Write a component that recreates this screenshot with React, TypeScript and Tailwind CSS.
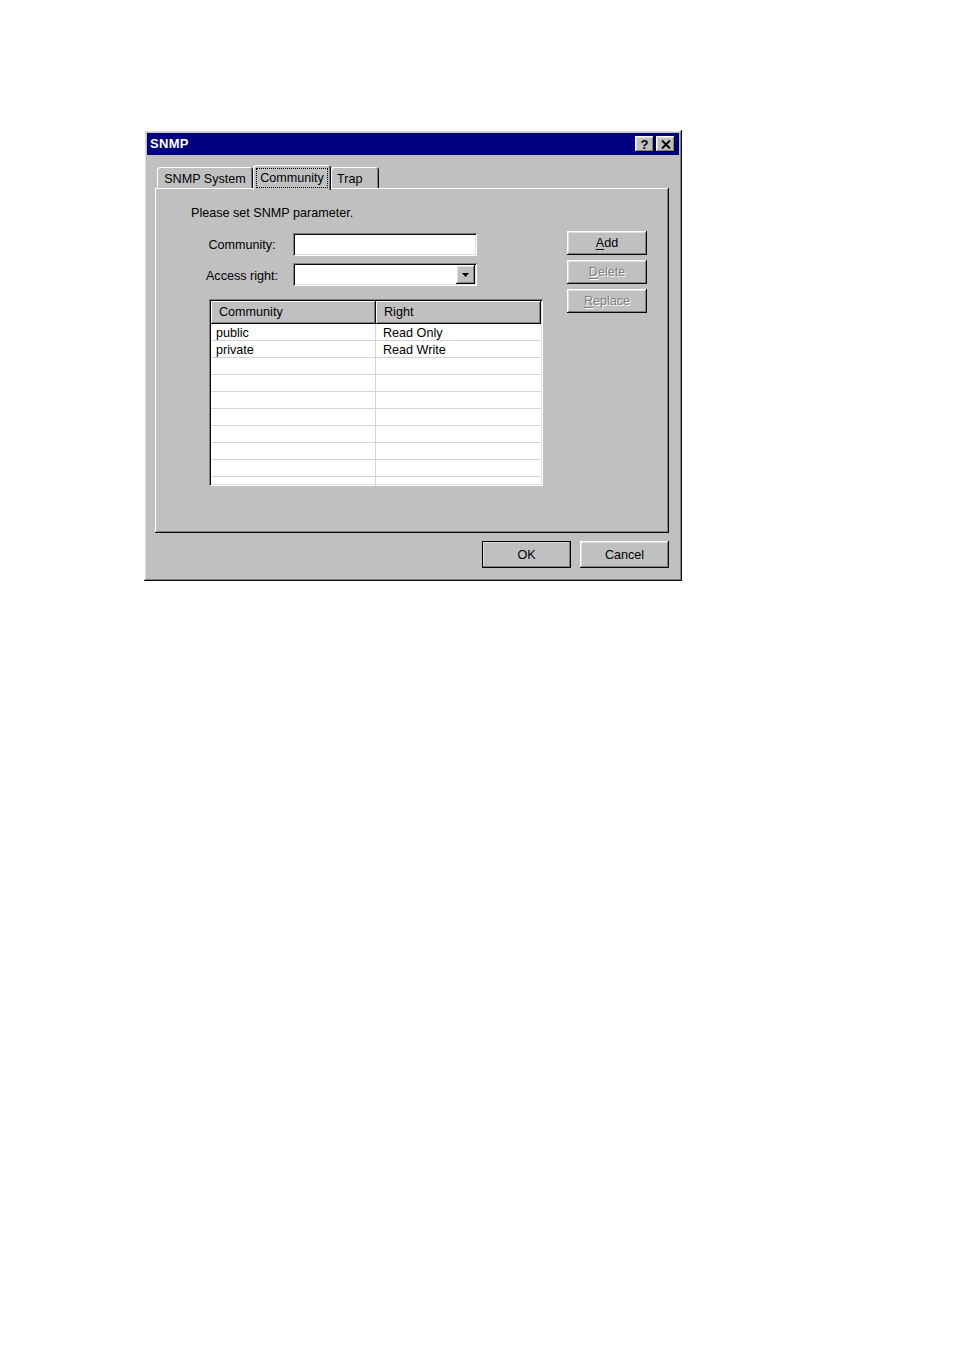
import React from "react";

const raised =
  "shadow-[inset_-1px_-1px_#0a0a0a,inset_1px_1px_#ffffff,inset_-2px_-2px_#808080,inset_2px_2px_#dfdfdf]";
const sunken =
  "shadow-[inset_1px_1px_#808080,inset_-1px_-1px_#ffffff,inset_2px_2px_#0a0a0a,inset_-2px_-2px_#dfdfdf]";
const headerCell =
  "flex items-center bg-[#c0c0c0] pl-[8px] shadow-[inset_-1px_-1px_#0a0a0a,inset_1px_1px_#ffffff,inset_-2px_-2px_#808080]";

function Btn({
  children,
  disabled,
  className = "",
}: {
  children: React.ReactNode;
  disabled?: boolean;
  className?: string;
}) {
  return (
    <div
      className={`flex items-center justify-center bg-[#c0c0c0] ${raised} ${
        disabled ? "text-[#808080] [text-shadow:1px_1px_0_#ffffff]" : "text-black"
      } ${className}`}
    >
      {children}
    </div>
  );
}

function Tab({
  label,
  active,
  className = "",
}: {
  label: string;
  active?: boolean;
  className?: string;
}) {
  if (active) {
    return (
      <div
        className={`relative z-10 -mb-[2px] flex h-[25px] items-start justify-center rounded-t-[3px] bg-[#c0c0c0] pt-[3px] shadow-[inset_1px_1px_#ffffff,inset_-1px_0_#0a0a0a,inset_-2px_0_#808080] ${className}`}
      >
        <span className="border border-dotted border-black px-[3px] pt-[1px] leading-[17px]">
          {label}
        </span>
      </div>
    );
  }
  return (
    <div
      className={`flex h-[21px] items-center rounded-t-[3px] bg-[#c0c0c0] pt-[4px] shadow-[inset_1px_1px_#ffffff,inset_-1px_0_#0a0a0a,inset_-2px_0_#808080] ${className}`}
    >
      {label}
    </div>
  );
}

const rows: [string, string][] = [
  ["public", "Read Only"],
  ["private", "Read Write"],
  ["", ""],
  ["", ""],
  ["", ""],
  ["", ""],
  ["", ""],
  ["", ""],
  ["", ""],
  ["", ""],
];

export default function App() {
  return (
    <div className="min-h-[1350px] w-full bg-white pl-[144px] pt-[130px] font-['Liberation_Sans',Arial,sans-serif] text-[12.6px] text-black">
      <div className={`w-[538px] bg-[#c0c0c0] p-[3px] ${raised}`}>
        {/* title bar */}
        <div className="flex h-[22px] items-center justify-between bg-[#000080] pl-[3px] pr-[4px]">
          <span className="text-[13px] font-bold tracking-[0.3px] text-white">SNMP</span>
          <div className="flex gap-[2px]">
            <Btn className="h-[16px] w-[19px] text-[13px] font-bold leading-none">?</Btn>
            <Btn className="h-[16px] w-[19px]">
              <svg width="10" height="9" viewBox="0 0 10 9">
                <path d="M1 0.5 L9 8.5 M9 0.5 L1 8.5" stroke="#000" strokeWidth="2" />
              </svg>
            </Btn>
          </div>
        </div>

        <div className="pl-[8px] pr-[10px] pb-[10px] pt-[10px]">
          {/* tabs */}
          <div className="flex h-[23px] items-end pl-[2px]">
            <Tab label="SNMP System" className="w-[96px] justify-center" />
            <Tab label="Community" active className="w-[78px]" />
            <Tab label="Trap" className="w-[48px] pl-[6px]" />
          </div>

          {/* panel */}
          <div className="flex h-[345px] bg-[#c0c0c0] shadow-[inset_-1px_-1px_#0a0a0a,inset_1px_1px_#ffffff,inset_-2px_-2px_#808080]">
            <div className="flex flex-col pl-[36px] pt-[17px]">
              <div className="h-[16px] leading-[16px]">Please set SNMP parameter.</div>

              <div className="mt-[12px] flex h-[23px] items-center">
                <span className="w-[102px] pt-[2px] text-center">Community:</span>
                <div className={`h-[23px] w-[184px] bg-white ${sunken}`} />
              </div>

              <div className="mt-[7px] flex h-[23px] items-center">
                <span className="w-[102px] pt-[3px] text-center">Access right:</span>
                <div className={`flex h-[23px] w-[184px] justify-end bg-white p-[2px] ${sunken}`}>
                  <Btn className="h-[19px] w-[19px]">
                    <svg width="8" height="4" viewBox="0 0 8 4">
                      <path d="M0 0 H7 L3.5 4 Z" fill="#000" />
                    </svg>
                  </Btn>
                </div>
              </div>

              {/* list view */}
              <div
                className={`ml-[18px] mt-[13px] h-[187px] w-[334px] overflow-hidden bg-white p-[2px] ${sunken}`}
              >
                <div className="flex h-[23px]">
                  <div className={`w-[165px] ${headerCell}`}>Community</div>
                  <div className={`flex-1 ${headerCell}`}>Right</div>
                </div>
                {rows.map((r, i) => (
                  <div key={i} className="flex h-[17px] border-b border-[#d4d4d4]">
                    <div className="flex w-[165px] items-center border-r border-[#d4d4d4] pl-[5px] pt-[1px] leading-[16px]">
                      {r[0]}
                    </div>
                    <div className="flex flex-1 items-center pl-[7px] pt-[1px] leading-[16px]">
                      {r[1]}
                    </div>
                  </div>
                ))}
              </div>
            </div>

            <div className="ml-auto flex flex-col gap-[5px] pr-[22px] pt-[43px]">
              <Btn className="h-[24px] w-[80px]">
                <span>
                  <span className="underline underline-offset-2">A</span>dd
                </span>
              </Btn>
              <Btn disabled className="h-[24px] w-[80px]">
                <span>
                  <span className="underline underline-offset-2">D</span>elete
                </span>
              </Btn>
              <Btn disabled className="h-[24px] w-[80px]">
                <span>
                  <span className="underline underline-offset-2">R</span>eplace
                </span>
              </Btn>
            </div>
          </div>

          {/* bottom buttons */}
          <div className="mt-[8px] flex justify-end gap-[9px]">
            <Btn className="h-[27px] w-[89px] pt-[1px] outline outline-1 -outline-offset-1 outline-black">
              OK
            </Btn>
            <Btn className="h-[27px] w-[89px] pt-[1px]">Cancel</Btn>
          </div>
        </div>
      </div>
    </div>
  );
}
